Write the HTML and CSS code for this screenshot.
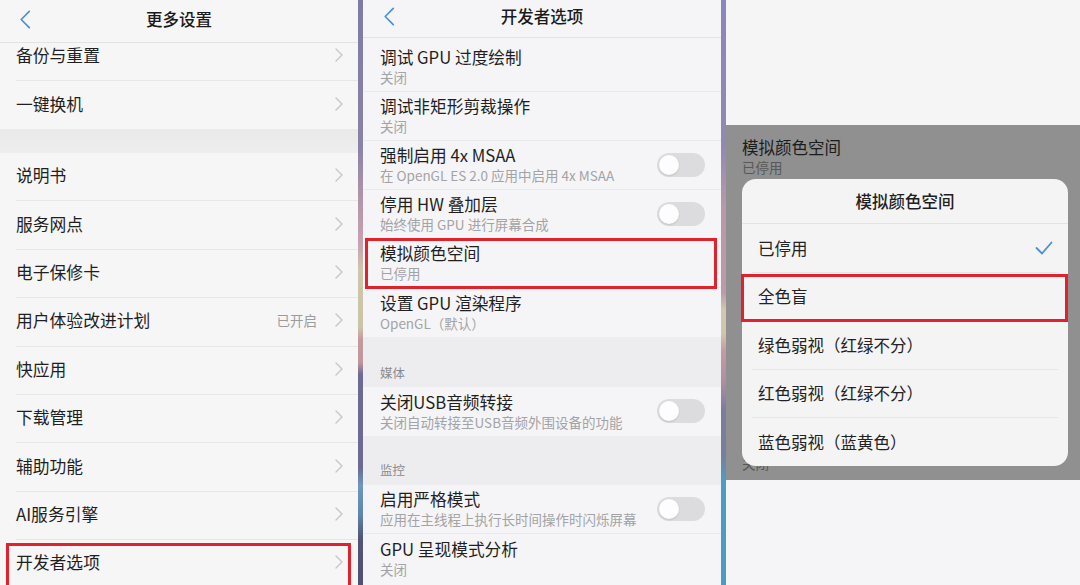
FILE: index.html
```html
<!DOCTYPE html>
<html lang="zh-CN">
<head>
<meta charset="utf-8">
<title>开发者选项</title>
<link rel="stylesheet" href="styles.css">
</head>
<body>
<div class="screen">

  <section class="panel p1">
    <header class="bar bar1">
      <svg class="back" viewBox="0 0 12 20"><path d="M10.5 1.5 L2 10 L10.5 18.5"/></svg>
      <h1>更多设置</h1>
      <span></span>
    </header>
    <div class="row cut"><span class="label">备份与重置</span><svg class="chev" viewBox="0 0 8 14"><path d="M1 1 L7 7 L1 13"/></svg></div>
    <div class="row last"><span class="label">一键换机</span><svg class="chev" viewBox="0 0 8 14"><path d="M1 1 L7 7 L1 13"/></svg></div>
    <div class="gap"></div>
    <div class="row"><span class="label">说明书</span><svg class="chev" viewBox="0 0 8 14"><path d="M1 1 L7 7 L1 13"/></svg></div>
    <div class="row"><span class="label">服务网点</span><svg class="chev" viewBox="0 0 8 14"><path d="M1 1 L7 7 L1 13"/></svg></div>
    <div class="row"><span class="label">电子保修卡</span><svg class="chev" viewBox="0 0 8 14"><path d="M1 1 L7 7 L1 13"/></svg></div>
    <div class="row"><span class="label">用户体验改进计划</span><span class="value">已开启</span><svg class="chev" viewBox="0 0 8 14"><path d="M1 1 L7 7 L1 13"/></svg></div>
    <div class="row"><span class="label">快应用</span><svg class="chev" viewBox="0 0 8 14"><path d="M1 1 L7 7 L1 13"/></svg></div>
    <div class="row"><span class="label">下载管理</span><svg class="chev" viewBox="0 0 8 14"><path d="M1 1 L7 7 L1 13"/></svg></div>
    <div class="row"><span class="label">辅助功能</span><svg class="chev" viewBox="0 0 8 14"><path d="M1 1 L7 7 L1 13"/></svg></div>
    <div class="row"><span class="label">AI服务引擎</span><svg class="chev" viewBox="0 0 8 14"><path d="M1 1 L7 7 L1 13"/></svg></div>
    <div class="row mark"><span class="label">开发者选项</span><svg class="chev" viewBox="0 0 8 14"><path d="M1 1 L7 7 L1 13"/></svg></div>
  </section>

  <div class="divider d1"></div>

  <section class="panel p2">
    <header class="bar bar2">
      <svg class="back" viewBox="0 0 12 20"><path d="M10.5 1.5 L2 10 L10.5 18.5"/></svg>
      <h1>开发者选项</h1>
      <span></span>
    </header>
    <div class="item first"><div class="txt"><div class="t">调试 GPU 过度绘制</div><div class="s">关闭</div></div></div>
    <div class="item"><div class="txt"><div class="t">调试非矩形剪裁操作</div><div class="s">关闭</div></div></div>
    <div class="item"><div class="txt"><div class="t">强制启用 4x MSAA</div><div class="s">在 OpenGL ES 2.0 应用中启用 4x MSAA</div></div><div class="toggle"><div class="knob"></div></div></div>
    <div class="item"><div class="txt"><div class="t">停用 HW 叠加层</div><div class="s">始终使用 GPU 进行屏幕合成</div></div><div class="toggle"><div class="knob"></div></div></div>
    <div class="item mark"><div class="txt"><div class="t">模拟颜色空间</div><div class="s">已停用</div></div></div>
    <div class="item nb"><div class="txt"><div class="t">设置 GPU 渲染程序</div><div class="s">OpenGL（默认）</div></div></div>
    <div class="band">媒体</div>
    <div class="item nb"><div class="txt"><div class="t">关闭USB音频转接</div><div class="s">关闭自动转接至USB音频外围设备的功能</div></div><div class="toggle"><div class="knob"></div></div></div>
    <div class="band b2">监控</div>
    <div class="item"><div class="txt"><div class="t">启用严格模式</div><div class="s">应用在主线程上执行长时间操作时闪烁屏幕</div></div><div class="toggle"><div class="knob"></div></div></div>
    <div class="item nb"><div class="txt"><div class="t">GPU 呈现模式分析</div><div class="s">关闭</div></div></div>
  </section>

  <div class="divider d2"></div>

  <section class="panel p3">
    <div class="top"></div>
    <div class="overlay">
      <div class="dim-t">模拟颜色空间</div>
      <div class="dim-s">已停用</div>
      <div class="dim-s peek">关闭</div>
      <div class="dialog">
        <div class="dlg-title">模拟颜色空间</div>
        <div class="opt"><span>已停用</span><svg class="check" viewBox="0 0 18 14"><path d="M1.5 7 L7 12.5 L16.5 1.5"/></svg></div>
        <div class="opt mark"><span>全色盲</span></div>
        <div class="opt"><span>绿色弱视（红绿不分）</span></div>
        <div class="opt"><span>红色弱视（红绿不分）</span></div>
        <div class="opt nb"><span>蓝色弱视（蓝黄色）</span></div>
      </div>
    </div>
    <div class="bottom"></div>
  </section>

</div>
</body>
</html>
```

FILE: styles.css
```css
* { box-sizing: border-box; margin: 0; padding: 0; }
html, body { width: 1080px; height: 585px; overflow: hidden; }
body {
  font-family: "Noto Sans CJK SC", "Noto Sans", sans-serif;
  color: #1f1f1f;
  background: #f5f5f5;
}
.screen { display: flex; width: 1080px; height: 585px; }
.panel { position: relative; height: 585px; overflow: hidden; }

.p1 { width: 358px; background: #f6f6f6; }
.p2 { width: 358px; background: #f5f5f7; }
.p3 { flex: 1; display: flex; flex-direction: column; }

.divider { width: 5px; height: 585px; flex: none; }
.d1 {
  background: linear-gradient(180deg,
    #7d7ba6 0%, #8a82a8 25%, #b696ac 35%, #c9a3b1 42%,
    #cdc6aa 46%, #cbc4a6 56%, #c7999f 58%, #c2949c 62%,
    #6d6b93 64%, #6c6a92 80%, #6b98bd 83%, #5f86ac 88%,
    #535478 92%, #4f5073 100%);
}
.d2 {
  background: linear-gradient(180deg,
    #8b86bc 0%, #9288b6 25%, #b898aa 35%, #bc9aa9 50%,
    #d0c8b0 53%, #cfc5ad 57%, #c69aa2 60%, #b08fa4 65%,
    #7d7ca0 70%, #74809f 78%, #4f9bc3 82%, #4a9cc4 100%);
}

/* header bars */
.bar {
  display: grid;
  grid-template-columns: 1fr auto 1fr;
  align-items: center;
  border-bottom: 1px solid #e3e3e5;
}
.bar h1 { font-size: 16.5px; font-weight: 500; line-height: 20px; color: #1a1a1a; }
.bar1 { height: 43px; padding-bottom: 4px; }
.bar2 { height: 38px; padding-bottom: 5px; }
.back {
  width: 12px; height: 19px;
  fill: none; stroke: #4d90d8; stroke-width: 1.8;
  stroke-linecap: round; stroke-linejoin: round;
}
.bar1 .back { margin-left: 19px; }
.bar2 .back { margin-left: 20px; }

/* panel 1 rows */
.row {
  position: relative;
  display: flex;
  align-items: center;
  height: 48.4px;
  margin-left: 16px;
  padding-right: 15px;
  padding-bottom: 3px;
  border-bottom: 1px solid #e7e7e7;
  font-size: 16.8px;
  line-height: 22px;
}
.row.cut { height: 38px; padding-bottom: 13px; }
.row.last { height: 48px; border-bottom: none; }
.row .label { flex: 1; }
.row .value { font-size: 13.5px; color: #9b9b9b; margin-right: 18px; }
.chev {
  width: 8px; height: 14px;
  fill: none; stroke: #c7c7c7; stroke-width: 1.4;
  stroke-linecap: round; stroke-linejoin: round;
}
.gap { height: 24px; background: linear-gradient(180deg, #e9e9e9, #eeeeee); }

.mark::after {
  content: "";
  position: absolute;
  border: 3px solid #e0222d;
  pointer-events: none;
}
.row.mark::after { top: 3px; bottom: -5px; left: -10px; right: 7px; }

/* panel 2 items */
.item {
  position: relative;
  display: flex;
  align-items: center;
  height: 49px;
  padding: 0 16px 1px 17px;
  border-bottom: 1px solid #e9e9eb;
}
.item.first { height: 54px; padding-top: 5px; }
.item.nb { border-bottom: none; }
.item .txt { flex: 1; }
.item .t { font-size: 16.7px; line-height: 20px; color: #1f1f1f; }
.item .s { font-size: 13.5px; line-height: 17px; color: #a3a3a5; margin-top: 2px; white-space: nowrap; }
.item.mark::after { top: -1px; bottom: -2px; left: 2px; right: 4px; }

.toggle {
  width: 48px; height: 24px;
  border-radius: 12px;
  background: #dcdcde;
  padding: 2px;
  flex: none;
}
.knob {
  width: 20px; height: 20px;
  border-radius: 50%;
  background: #fdfdfd;
  box-shadow: 0 1px 2px rgba(0,0,0,0.12);
}

.band {
  height: 50px;
  display: flex;
  align-items: flex-end;
  padding: 0 0 6px 17px;
  background: #ededef;
  font-size: 12.5px;
  line-height: 16px;
  color: #8b8b8d;
}
.band.b2 { height: 49px; padding-bottom: 7px; }

/* panel 3 */
.top { height: 125px; background: #f4f5f4; }
.bottom { flex: 1; background: #f5f5f7; }
.overlay {
  position: relative;
  height: 355px;
  background: #8f908f;
  padding: 12px 0 0 16px;
}
.dim-t { font-size: 16.5px; line-height: 20px; color: #1c1c1c; }
.dim-s { font-size: 13.5px; line-height: 17px; color: #575857; margin-top: 2px; }
.peek { margin-top: 279px; }

.dialog {
  position: absolute;
  left: 16px; top: 54px;
  width: 326px; height: 287px;
  border-radius: 14px;
  background: #f4f4f4;
}
.dlg-title {
  height: 45px;
  display: flex;
  align-items: center;
  justify-content: center;
  font-size: 16.5px;
  font-weight: 500;
  border-bottom: 1px solid #e3e3e3;
}
.opt {
  position: relative;
  display: flex;
  align-items: center;
  justify-content: space-between;
  height: 48.5px;
  margin: 0 10px;
  padding: 0 5px 0 6px;
  border-bottom: 1px solid #e6e6e6;
  font-size: 16.5px;
  line-height: 20px;
  color: #222;
}
.opt.nb { border-bottom: none; }
.opt.mark::after { top: 1px; bottom: -2px; left: -11px; right: -10px; }
.check {
  width: 18px; height: 14px;
  fill: none; stroke: #4a8fdc; stroke-width: 1.8;
  stroke-linecap: round; stroke-linejoin: round;
}
```
